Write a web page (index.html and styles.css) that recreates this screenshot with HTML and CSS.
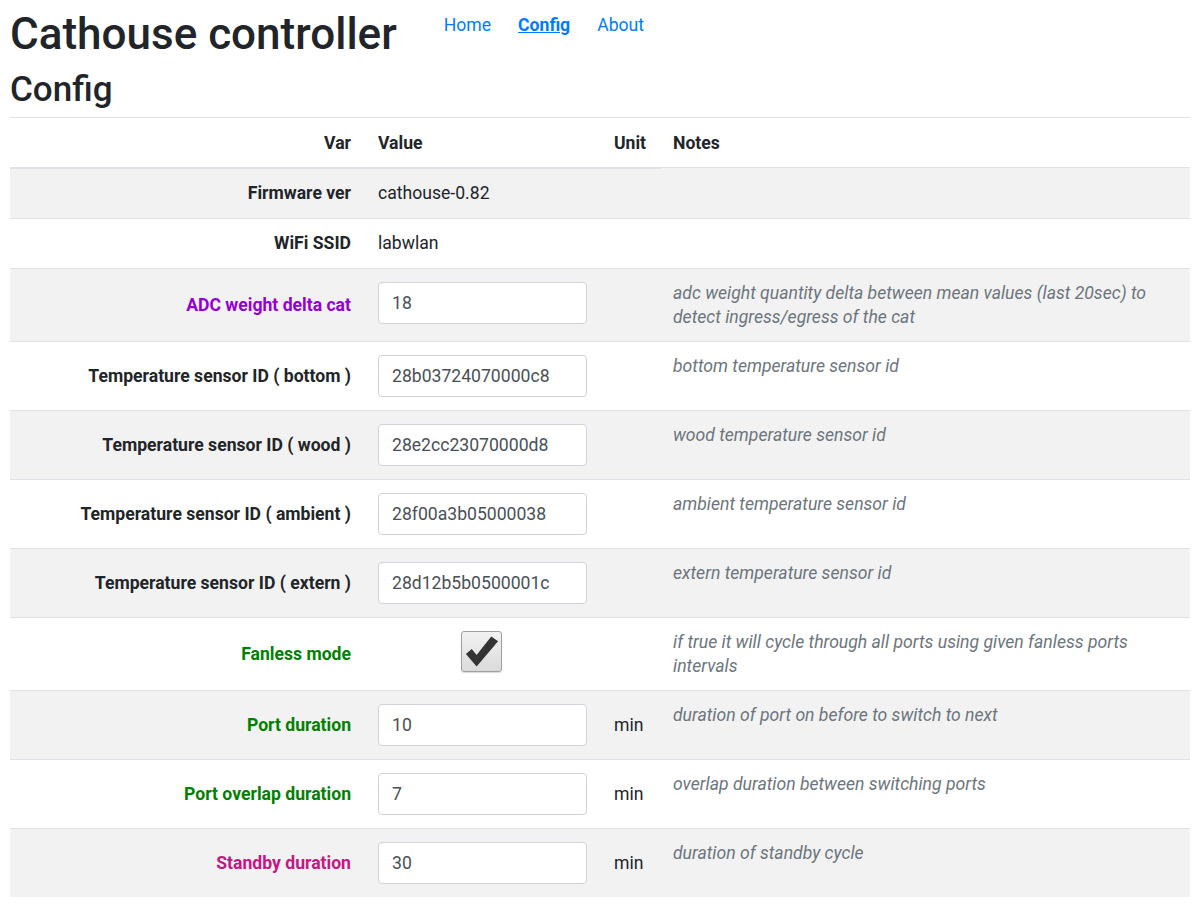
FILE: index.html
```html
<!DOCTYPE html>
<html lang="en">
<head>
<meta charset="utf-8">
<title>Cathouse controller - Config</title>
<link rel="stylesheet" href="styles.css">
</head>
<body>
<div class="page">
  <header class="topbar">
    <h1 class="title">Cathouse controller</h1>
    <nav class="nav">
      <a href="#" class="nav-link">Home</a>
      <a href="#" class="nav-link active">Config</a>
      <a href="#" class="nav-link">About</a>
    </nav>
  </header>
  <h2 class="page-title">Config</h2>
  <hr class="rule">
  <table class="cfg">
    <colgroup>
      <col class="c-var"><col class="c-val"><col class="c-unit"><col class="c-notes">
    </colgroup>
    <thead>
      <tr>
        <th class="var">Var</th>
        <th class="val ruled">Value</th>
        <th class="unit ruled">Unit</th>
        <th class="notes">Notes</th>
      </tr>
    </thead>
    <tbody>
      <tr class="plain">
        <th class="var">Firmware ver</th>
        <td class="val">cathouse-0.82</td>
        <td class="unit"></td>
        <td class="notes"></td>
      </tr>
      <tr class="plain">
        <th class="var">WiFi SSID</th>
        <td class="val">labwlan</td>
        <td class="unit"></td>
        <td class="notes"></td>
      </tr>
      <tr>
        <th class="var v-purple">ADC weight delta cat</th>
        <td class="val"><input class="field" type="text" value="18"></td>
        <td class="unit"></td>
        <td class="notes">adc weight quantity delta between mean values (last 20sec) to detect ingress/egress of the cat</td>
      </tr>
      <tr>
        <th class="var">Temperature sensor ID ( bottom )</th>
        <td class="val"><input class="field" type="text" value="28b03724070000c8"></td>
        <td class="unit"></td>
        <td class="notes">bottom temperature sensor id</td>
      </tr>
      <tr>
        <th class="var">Temperature sensor ID ( wood )</th>
        <td class="val"><input class="field" type="text" value="28e2cc23070000d8"></td>
        <td class="unit"></td>
        <td class="notes">wood temperature sensor id</td>
      </tr>
      <tr>
        <th class="var">Temperature sensor ID ( ambient )</th>
        <td class="val"><input class="field" type="text" value="28f00a3b05000038"></td>
        <td class="unit"></td>
        <td class="notes">ambient temperature sensor id</td>
      </tr>
      <tr>
        <th class="var">Temperature sensor ID ( extern )</th>
        <td class="val"><input class="field" type="text" value="28d12b5b0500001c"></td>
        <td class="unit"></td>
        <td class="notes">extern temperature sensor id</td>
      </tr>
      <tr>
        <th class="var v-green">Fanless mode</th>
        <td class="val center">
          <span class="check" role="checkbox" aria-checked="true">
            <svg viewBox="0 0 40 40" width="40" height="40" aria-hidden="true">
              <polygon points="4,23 10,18 15,24 30,5 37,10 15,36" fill="#333"/>
            </svg>
          </span>
        </td>
        <td class="unit"></td>
        <td class="notes">if true it will cycle through all ports using given fanless ports intervals</td>
      </tr>
      <tr>
        <th class="var v-green">Port duration</th>
        <td class="val"><input class="field" type="text" value="10"></td>
        <td class="unit">min</td>
        <td class="notes">duration of port on before to switch to next</td>
      </tr>
      <tr>
        <th class="var v-green">Port overlap duration</th>
        <td class="val"><input class="field" type="text" value="7"></td>
        <td class="unit">min</td>
        <td class="notes">overlap duration between switching ports</td>
      </tr>
      <tr>
        <th class="var v-pink">Standby duration</th>
        <td class="val"><input class="field" type="text" value="30"></td>
        <td class="unit">min</td>
        <td class="notes">duration of standby cycle</td>
      </tr>
    </tbody>
  </table>
</div>
</body>
</html>
```

FILE: styles.css
```css
html, body {
  margin: 0;
  padding: 0;
  background: #fff;
}
body {
  font-family: Roboto, "Liberation Sans", Arial, sans-serif;
  font-size: 17.6px;
  line-height: 24px;
  color: #212529;
}
.page {
  padding: 0 5px 0 10px;
}
.topbar {
  display: flex;
  align-items: flex-start;
  gap: 47px;
}
.title {
  margin: 8px 0 0 0;
  font-size: 44px;
  font-weight: 500;
  line-height: 1.2;
}
.nav {
  display: flex;
  gap: 27px;
  padding-top: 13px;
}
.nav-link {
  color: #007bff;
  text-decoration: none;
  font-size: 17.6px;
}
.nav-link.active {
  font-weight: 700;
  text-decoration: underline;
}
.page-title {
  margin: 8px 0 0 0;
  font-size: 35px;
  font-weight: 500;
  line-height: 1.2;
}
.rule {
  margin: 6px 0 0 0;
  border: 0;
  border-top: 1px solid #e2e2e2;
  height: 0;
}
.cfg {
  width: 100%;
  border-collapse: collapse;
  table-layout: fixed;
}
.c-var { width: 356px; }
.c-val { width: 236px; }
.c-unit { width: 59px; }
.cfg th, .cfg td {
  padding: 12px;
  border-top: 1px solid #dee2e6;
  text-align: left;
}
.cfg thead th {
  border-top: 0;
  padding-top: 13px;
  font-weight: 700;
  vertical-align: bottom;
}
.cfg thead th.ruled, .cfg thead th.var {
  border-bottom: 2px solid #dee2e6;
}
.cfg thead th.notes {
  border-bottom: 0;
}
.cfg tbody tr:nth-child(odd) {
  background: #f2f2f2;
}
.cfg tr.plain th, .cfg tr.plain td {
  padding-bottom: 13px;
}
.cfg .var {
  text-align: right;
  padding-right: 15px;
  font-weight: 700;
  vertical-align: middle;
}
.cfg td.val, .cfg td.unit, .cfg td.notes {
  vertical-align: top;
}
.cfg td.val {
  padding-right: 17px;
}
.cfg td.unit {
  vertical-align: middle;
}
.cfg td.notes {
  font-style: italic;
  color: #6c757d;
}
.cfg td.center {
  text-align: center;
}
.v-purple { color: #9400d3; }
.v-green { color: #008000; }
.v-pink { color: #c71585; }
.field {
  display: block;
  box-sizing: border-box;
  width: 209px;
  height: 42px;
  margin: 1px 0;
  padding: 8px 13px;
  font-family: inherit;
  font-size: 17.6px;
  line-height: 24px;
  color: #495057;
  background: #fff;
  border: 1px solid #ced4da;
  border-radius: 4px;
}
.check {
  display: inline-flex;
  align-items: center;
  justify-content: center;
  box-sizing: border-box;
  width: 41px;
  height: 41px;
  margin: 1px 0;
  vertical-align: top;
  background: linear-gradient(#f2f2f2, #dadada);
  border: 1px solid #a0a0a0;
  border-radius: 3px;
  box-shadow: 0 1px 1px rgba(0,0,0,0.15);
}
.check svg {
  display: block;
}
```
